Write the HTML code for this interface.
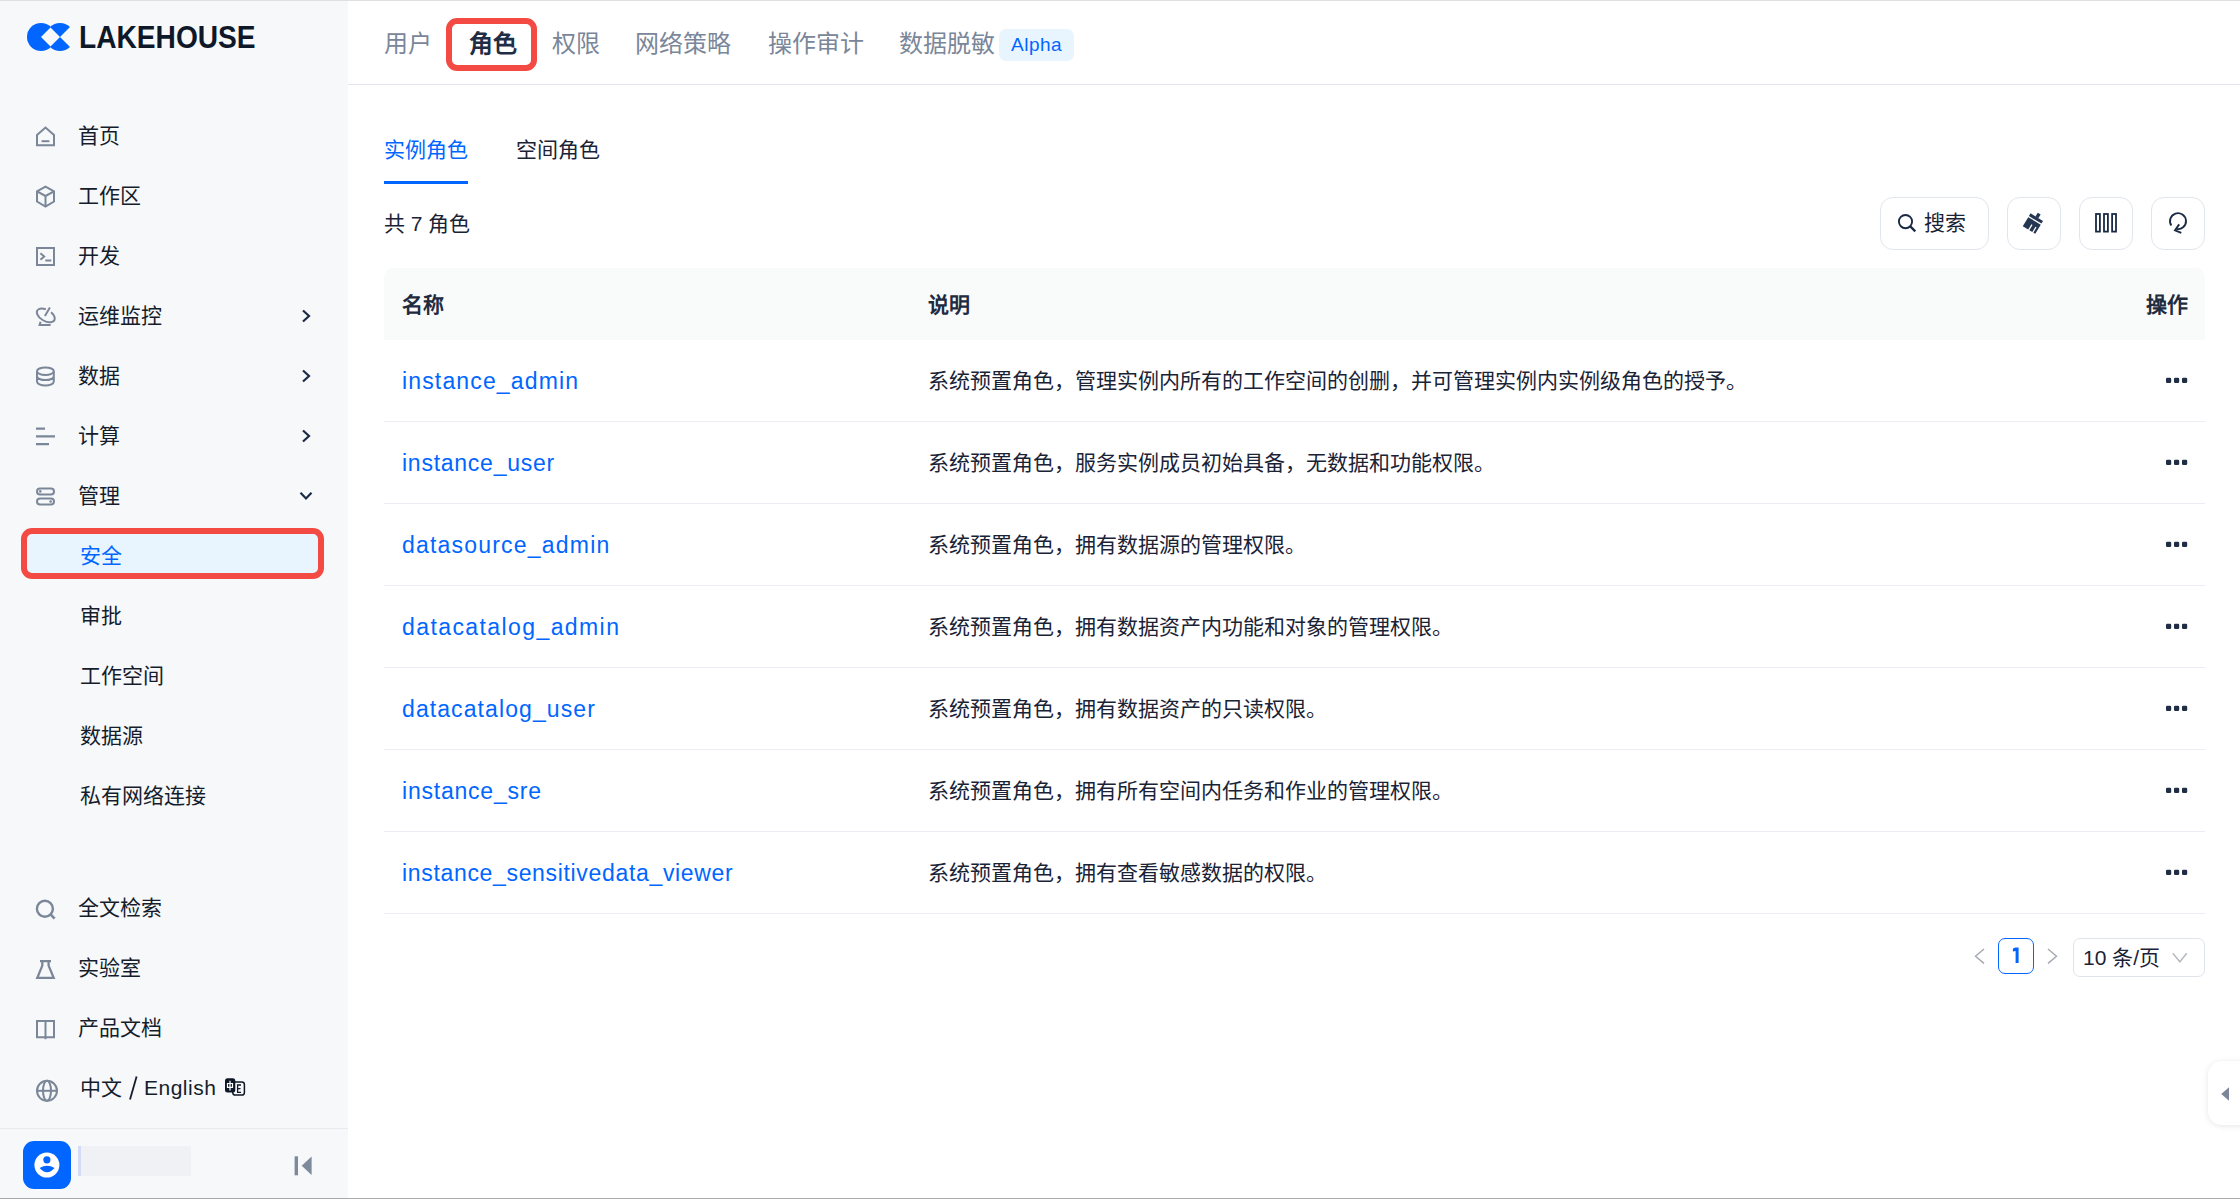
<!DOCTYPE html>
<html lang="zh-CN"><head><meta charset="utf-8">
<style>
*{box-sizing:border-box;margin:0;padding:0}
html,body{width:2240px;height:1199px;overflow:hidden;background:#fff}
body{position:relative;font-family:"Liberation Sans",sans-serif;color:#1a2336}
.a{position:absolute;white-space:nowrap}
#side{position:absolute;left:0;top:0;width:348px;height:1199px;background:#f7f8fa}
.mi{position:absolute;left:78px;font-size:21px;line-height:60px;height:60px;color:#151d2c}
.sub{left:80px}
.tab{position:absolute;top:2px;font-size:24px;line-height:84px;color:#7a8699}
.th{position:absolute;top:269px;font-size:21px;line-height:72px;font-weight:bold;color:#1f2b40}
.rn{position:absolute;left:402px;font-size:23px;line-height:82px;color:#0066ff}
.rd{position:absolute;left:928px;font-size:21px;line-height:82px;color:#1a2336}
.sep{position:absolute;left:384px;width:1821px;height:1px;background:#eaeef4}
.btn{position:absolute;top:197px;height:53px;border:1px solid #e1e5ec;border-radius:13px;background:#fff}
</style></head><body>
<div style="position:absolute;left:0;top:0;width:2240px;height:1px;background:#dfe1de;z-index:5"></div>
<div style="position:absolute;left:0;top:1198px;width:2240px;height:1px;background:#a9a9a9;z-index:5"></div>

<div id="side">
  <!-- logo -->
  <svg class="a" style="left:0;top:0" width="80" height="70" viewBox="0 0 80 70">
    <circle cx="41" cy="37" r="14" fill="#0066ff"/>
    <circle cx="60" cy="37" r="14" fill="#0066ff"/>
    <path d="M41 37 L50.5 27.5 L60 37 L50.5 46.5 Z" fill="#f7f8fa"/>
    <path d="M60 37 L76 21 L80 21 L80 53 L76 53 Z" fill="#f7f8fa"/>
  </svg>
  <div class="a" style="left:79px;top:21px;font-size:32px;line-height:32px;font-weight:bold;color:#0e1828;transform:scaleX(0.879);transform-origin:0 0">LAKEHOUSE</div>

  <div class="mi" style="top:106px">首页</div>
  <div class="mi" style="top:166px">工作区</div>
  <div class="mi" style="top:226px">开发</div>
  <div class="mi" style="top:286px">运维监控</div>
  <div class="mi" style="top:346px">数据</div>
  <div class="mi" style="top:406px">计算</div>
  <div class="mi" style="top:466px">管理</div>

  <div class="a" style="left:21px;top:528px;width:303px;height:51px;border:6px solid #f34a44;border-radius:11px;background:#e8f5ff"></div>
  <div class="mi sub" style="top:526px;color:#0066ff">安全</div>
  <div class="mi sub" style="top:586px">审批</div>
  <div class="mi sub" style="top:646px">工作空间</div>
  <div class="mi sub" style="top:706px">数据源</div>
  <div class="mi sub" style="top:766px">私有网络连接</div>

  <div class="mi" style="top:878px">全文检索</div>
  <div class="mi" style="top:938px">实验室</div>
  <div class="mi" style="top:998px">产品文档</div>
  <div class="mi" style="top:1058px;left:80px">中文</div><div class="mi" style="top:1058px;left:144px;letter-spacing:0.5px">English</div>

  <div class="a" style="left:0;top:1128px;width:348px;height:1px;background:#e8eaf0"></div>
  <div class="a" style="left:23px;top:1141px;width:48px;height:48px;border-radius:11px;background:#0066ff"></div>
  <div class="a" style="left:78px;top:1146px;width:113px;height:30px;background:#f0f1f4"></div>
  <div class="a" style="left:78px;top:1146px;width:3px;height:30px;background:#d3dbf6"></div>

  <svg class="a" style="left:0;top:0" width="348" height="1199" viewBox="0 0 348 1199" fill="none" stroke="#7b8798" stroke-width="2">
    <!-- home -->
    <path d="M37 135 L45.5 127.5 L54 135 V145.3 H37 Z" stroke-linejoin="miter"/>
    <path d="M41.6 141.2 H49.4"/>
    <!-- cube -->
    <path d="M45.5 186.7 L54 191.3 V201.5 L45.5 206.7 L37 201.5 V191.3 Z M37 191.3 L45.5 196 L54 191.3 M45.5 196 V206.7"/>
    <!-- terminal -->
    <rect x="37" y="248" width="17" height="17"/>
    <path d="M40.4 253.3 L44.2 256.5 L40.4 259.7 M45.3 260.4 H51.3"/>
    <!-- satellite -->
    <path d="M51.09 312.3 A9.8 5.6 30 1 1 45.84 309.27"/>
    <path d="M49.9 307.6 L44.9 316"/>
    <path d="M40.6 321.8 L39.6 325 H50.6"/>
    <!-- database -->
    <ellipse cx="45.4" cy="371.2" rx="8.4" ry="3.8"/>
    <path d="M37 371.2 V381.6 A8.4 3.8 0 0 0 53.8 381.6 V371.2 M37 376.3 A8.4 3.8 0 0 0 53.8 376.3"/>
    <!-- compute -->
    <path d="M36 428.6 H45 M36 436.4 H55 M36 444.2 H49" stroke-width="2.2"/>
    <!-- manage -->
    <rect x="37" y="488.4" width="17" height="6" rx="3"/>
    <rect x="37" y="498.4" width="17" height="6.2" rx="3.1"/>
    <circle cx="40.3" cy="491.4" r="1.3" fill="#7b8798" stroke="none"/>
    <circle cx="50.6" cy="501.5" r="1.3" fill="#7b8798" stroke="none"/>
    <!-- search -->
    <circle cx="44.9" cy="908.7" r="8" stroke-width="2.4"/>
    <path d="M50.6 914.4 L54.6 918.6" stroke-width="2.6"/>
    <!-- flask -->
    <path d="M40 961.1 H51 M42.3 961.1 V965.6 L37.3 977.8 H53.7 L48.6 965.6 V961.1" stroke-width="2.3"/>
    <!-- book -->
    <path d="M37 1021 H54 V1037.3 H37 Z M45.5 1021 V1039.2"/>
    <!-- globe -->
    <circle cx="47" cy="1090.8" r="10"/>
    <ellipse cx="47" cy="1090.8" rx="4" ry="10"/>
    <path d="M37 1090.8 H57"/>
    <!-- chevrons -->
    <g stroke="#1a2a44" stroke-width="2.2">
      <path d="M303 310.5 L309 316 L303 321.5"/>
      <path d="M303 370.5 L309 376 L303 381.5"/>
      <path d="M303 430.5 L309 436 L303 441.5"/>
      <path d="M300.5 492.8 L306 498.5 L311.5 492.8"/>
    </g>
    <!-- collapse -->
    <rect x="294.6" y="1156.3" width="3.4" height="19" fill="#7d8a9c" stroke="none"/>
    <path d="M311.6 1156.5 V1175 L301.7 1165.7 Z" fill="#7d8a9c" stroke="none"/>
    <!-- avatar person -->
    <circle cx="46.9" cy="1165.1" r="12.5" fill="#fff" stroke="none"/>
    <circle cx="46.9" cy="1159.8" r="3.6" fill="#0066ff" stroke="none"/>
    <path d="M39.6 1168 Q47 1163.5 54.6 1168 Q47 1176.5 39.6 1168 Z" fill="#0066ff" stroke="none"/>
    <path d="M136.6 1076.6 L130 1099.6" stroke="#151d2c" stroke-width="1.8"/>
    <!-- translate icon -->
    <rect x="225" y="1078.2" width="10.3" height="14.3" rx="2.5" fill="#0f1726" stroke="none"/>
    <rect x="232.8" y="1082" width="11.6" height="13" rx="2.6" stroke="#0f1726" stroke-width="1.5"/>
    <path d="M230 1080.8 V1090.5 M227.5 1083.5 H232.5 V1087.3 H227.5 Z" stroke="#fff" stroke-width="1.2"/>
    <path d="M241 1085 H237.6 V1092.3 H241 M237.6 1088.6 H240.5" stroke="#0f1726" stroke-width="1.3"/>
  </svg>
</div>

<!-- top tabs -->
<div class="tab" style="left:384px">用户</div>
<div class="tab" style="left:469px;font-weight:bold;color:#1f2d45">角色</div>
<div class="tab" style="left:552px">权限</div>
<div class="tab" style="left:635px">网络策略</div>
<div class="tab" style="left:768px">操作审计</div>
<div class="tab" style="left:899px">数据脱敏</div>
<div class="a" style="left:999px;top:29px;width:75px;height:32px;border-radius:7px;background:#e8f5ff"></div>
<div class="a" style="left:1011px;top:29px;font-size:19px;line-height:32px;letter-spacing:0.5px;color:#0066ff">Alpha</div>
<div class="a" style="left:446px;top:18px;width:91px;height:53px;border:6px solid #f34a44;border-radius:11px"></div>
<div class="a" style="left:348px;top:84px;width:1892px;height:1px;background:#e3e6ec"></div>

<!-- sub tabs -->
<div class="a" style="left:384px;top:139px;font-size:21px;line-height:21px;color:#0066ff">实例角色</div>
<div class="a" style="left:516px;top:139px;font-size:21px;line-height:21px;color:#1a2336">空间角色</div>
<div class="a" style="left:384px;top:181px;width:84px;height:3px;background:#0066ff"></div>
<div class="a" style="left:384px;top:213px;font-size:21px;line-height:21px;color:#1a2336">共 7 角色</div>

<!-- buttons -->
<div class="btn" style="left:1880px;width:109px"></div>
<div class="a" style="left:1924px;top:196px;font-size:21px;line-height:53px;color:#1a2336">搜索</div>
<div class="btn" style="left:2007px;width:54px"></div>
<div class="btn" style="left:2079px;width:54px"></div>
<div class="btn" style="left:2151px;width:54px"></div>
<svg class="a" style="left:1860px;top:190px" width="380" height="70" viewBox="1860 190 380 70" fill="none" stroke="#1a2a44" stroke-width="1.9">
  <circle cx="1905.5" cy="221.6" r="6.6"/>
  <path d="M1910.3 226.4 L1915.3 231.4" stroke-width="2.2"/>
  <g transform="translate(2028.26 217.13) rotate(31)" fill="#243651" stroke="none">
    <rect x="5.9" y="-8.7" width="3.3" height="4.5"/>
    <rect x="0" y="-4.4" width="14.6" height="3.2"/>
    <path d="M0 0 H14.6 V10.7 H12.4 V4.5 H11.1 V10.7 H7.7 V4.5 H6.4 V10.7 H0 Z"/>
  </g>
  <g stroke-width="1.8">
    <rect x="2096" y="214" width="3.9" height="17.6"/>
    <rect x="2104" y="214" width="3.9" height="17.6"/>
    <rect x="2112.1" y="214" width="3.9" height="17.6"/>
  </g>
  <path d="M2171.3 225.5 A8 8 0 1 1 2176.6 229" stroke-width="1.9"/>
  <path d="M2179.2 224.4 L2175 230.3 L2181.3 232.8" stroke-width="1.9"/>
</svg>

<!-- table -->
<div class="a" style="left:384px;top:268px;width:1821px;height:72px;background:#f9fafa;border-radius:9px 9px 0 0"></div>
<div class="th" style="left:402px">名称</div>
<div class="th" style="left:928px">说明</div>
<div class="th" style="left:2146px">操作</div>

<div class="rn" style="top:340px;letter-spacing:1.15px">instance_admin</div>
<div class="rd" style="top:340px">系统预置角色，管理实例内所有的工作空间的创删，并可管理实例内实例级角色的授予。</div>
<div class="sep" style="top:421px"></div>
<div class="rn" style="top:422px;letter-spacing:0.75px">instance_user</div>
<div class="rd" style="top:422px">系统预置角色，服务实例成员初始具备，无数据和功能权限。</div>
<div class="sep" style="top:503px"></div>
<div class="rn" style="top:504px;letter-spacing:1.2px">datasource_admin</div>
<div class="rd" style="top:504px">系统预置角色，拥有数据源的管理权限。</div>
<div class="sep" style="top:585px"></div>
<div class="rn" style="top:586px;letter-spacing:1.41px">datacatalog_admin</div>
<div class="rd" style="top:586px">系统预置角色，拥有数据资产内功能和对象的管理权限。</div>
<div class="sep" style="top:667px"></div>
<div class="rn" style="top:668px;letter-spacing:1.09px">datacatalog_user</div>
<div class="rd" style="top:668px">系统预置角色，拥有数据资产的只读权限。</div>
<div class="sep" style="top:749px"></div>
<div class="rn" style="top:750px;letter-spacing:0.78px">instance_sre</div>
<div class="rd" style="top:750px">系统预置角色，拥有所有空间内任务和作业的管理权限。</div>
<div class="sep" style="top:831px"></div>
<div class="rn" style="top:832px;letter-spacing:0.67px">instance_sensitivedata_viewer</div>
<div class="rd" style="top:832px">系统预置角色，拥有查看敏感数据的权限。</div>
<div class="sep" style="top:913px"></div>

<svg class="a" style="left:2160px;top:370px" width="40" height="510" viewBox="2160 370 40 510" fill="#1f2d45">
  <g id="dots"><rect x="2166" y="377.8" width="5.2" height="5.2" rx="1.3"/><rect x="2174" y="377.8" width="5.2" height="5.2" rx="1.3"/><rect x="2182" y="377.8" width="5.2" height="5.2" rx="1.3"/></g>
  <use href="#dots" y="82"/><use href="#dots" y="164"/><use href="#dots" y="246"/><use href="#dots" y="328"/><use href="#dots" y="410"/><use href="#dots" y="492"/>
</svg>

<!-- pagination -->
<svg class="a" style="left:1960px;top:930px" width="250" height="60" viewBox="1960 930 250 60" fill="none">
  <path d="M1984 949 L1975.5 956.2 L1984 963.4" stroke="#a3a8b0" stroke-width="1.4"/>
  <path d="M2048 949 L2056.5 956.2 L2048 963.4" stroke="#a3a8b0" stroke-width="1.4"/>
  <path d="M2172.8 953.3 L2179.8 961.8 L2186.8 953.3" stroke="#b4b8bf" stroke-width="1.4"/>
</svg>
<div class="a" style="left:1998px;top:938px;width:36px;height:36px;border:1.6px solid #0066ff;border-radius:7px"></div>
<svg class="a" style="left:2005px;top:943px" width="20" height="25" viewBox="2005 943 20 25"><path d="M2012.9 948.6 L2015.6 947.6 H2018.6 V963.1 H2015.6 V950.9 L2012.9 951.6 Z" fill="#0066ff"/></svg>
<div class="a" style="left:2073px;top:938px;width:132px;height:39px;border:1px solid #dfe3ea;border-radius:7px"></div>
<div class="a" style="left:2083px;top:938px;font-size:21px;line-height:39px;color:#1a2336">10 条/页</div>

<!-- right handle -->
<div class="a" style="left:2208px;top:1061px;width:60px;height:64px;border-radius:14px;background:#fff;box-shadow:0 1px 6px rgba(0,0,0,0.10)"></div>
<svg class="a" style="left:2215px;top:1080px" width="25" height="30" viewBox="2215 1080 25 30"><path d="M2229 1087.2 V1100.7 L2221.2 1094 Z" fill="#7b8798"/></svg>
</body></html>
